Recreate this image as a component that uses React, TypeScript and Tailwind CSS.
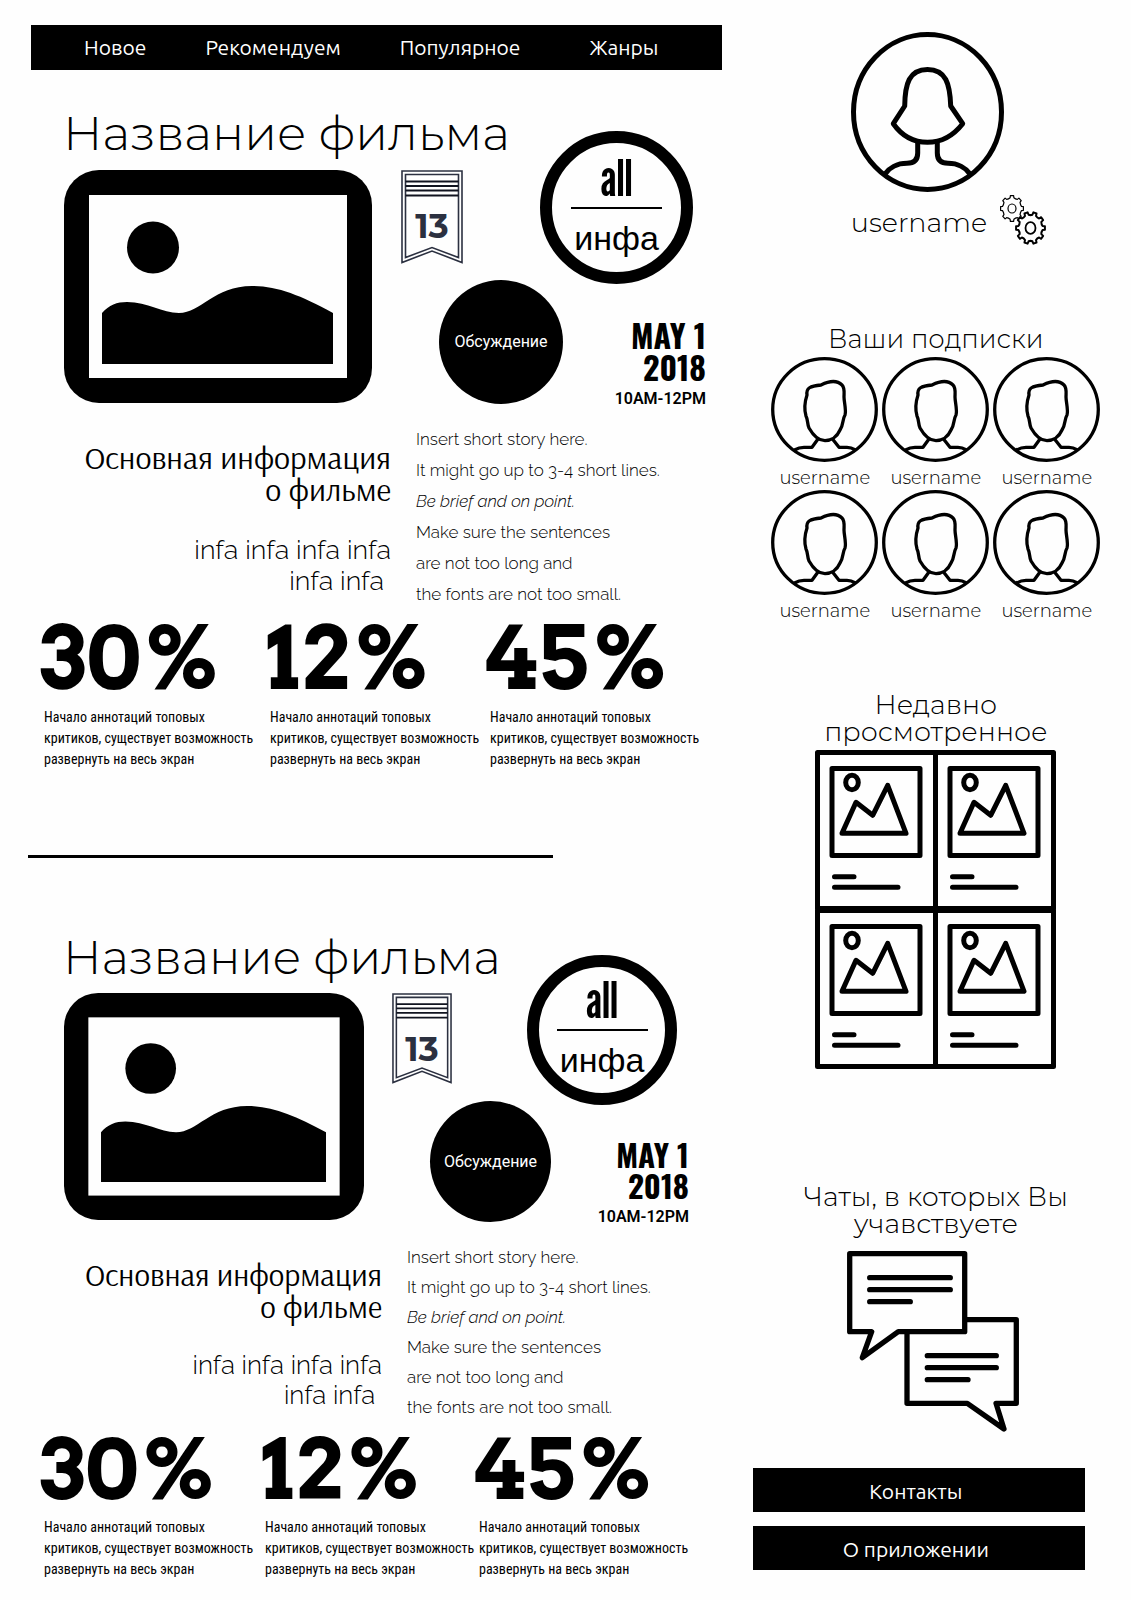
type Size = "large" | "small";

const display = "font-['Montserrat','Open_Sans',sans-serif]";
const story = "font-['Raleway','Lato',sans-serif]";
const poster = "font-['Oswald','Roboto_Condensed','Roboto',sans-serif]";
const ui = "font-['Ubuntu','Open_Sans',sans-serif]";
const condensed = "font-['Roboto_Condensed','Roboto',sans-serif]";

const sizes = {
  large: {
    title: "text-[48px] leading-[48px] mb-[13px]",
    picture: "w-[308px]",
    side: "w-[334px]",
    ribbon: "ml-[29px] w-[62px]",
    info: "ml-[77px] -mt-[39px] size-[153px]",
    discuss: "ml-[67px] size-[124px]",
    date: "text-[32px] leading-8",
    facts: "w-[360px] mt-[17px]",
    factsTitle: "text-[32px] leading-8",
    factsText: "text-[27px] leading-[31px] mt-[29px]",
    story: "leading-[31px]",
    stats: "grid-cols-[226px_220px_auto]",
    percent: "text-[86px] leading-[97px]",
  },
  small: {
    title: "text-[47px] leading-[48px] mb-[11px]",
    picture: "w-[300px]",
    side: "w-[325px]",
    ribbon: "ml-[28px] w-[60px]",
    info: "ml-[75px] -mt-[38px] size-[150px]",
    discuss: "ml-[66px] size-[121px]",
    date: "text-[31px] leading-[31px]",
    facts: "w-[351px] mt-[17px]",
    factsTitle: "text-[31px] leading-8",
    factsText: "text-[26px] leading-[30px] mt-[27px]",
    story: "leading-[30px]",
    stats: "grid-cols-[221px_214px_auto]",
    percent: "text-[84px] leading-[95px]",
  },
};

const storyLines = [
  "Insert short story here.",
  "It might go up to 3-4 short lines.",
  "Be brief and on point.",
  "Make sure the sentences",
  "are not too long and",
  "the fonts are not too small.",
];

function PictureIcon({ className }: { className: string }) {
  return (
    <svg viewBox="0 0 308 233" className={`shrink-0 ${className}`} role="img" aria-label="Кадр">
      <rect width="308" height="233" rx="35" />
      <rect x="25" y="25" width="258" height="183" fill="#fefefe" />
      <circle cx="89" cy="77.5" r="26" />
      <path d="M38 143C45 135 53 132 63 132C84 132 98 143 115 143C137 143 150 116 188 116C213 116 236 125 269 143V194H38Z" />
    </svg>
  );
}

function Ribbon({ className }: { className: string }) {
  return (
    <div className={`relative shrink-0 self-start ${className}`}>
      <svg viewBox="0 0 62 94" fill="none" stroke="#2b3040" strokeWidth="1.6" className="w-full">
        <path d="M1 1H61V92.5L31 81L1 92.5Z" />
        <path d="M4.5 4.5H57.5V87.5L31 77.5L4.5 87.5Z" />
        <path d="M4.5 11.5H57.5M4.5 16H57.5M4.5 20.5H57.5M4.5 25.5H57.5" stroke="#10131f" strokeWidth="1.8" />
      </svg>
      <span className={`absolute inset-x-0 top-9 text-center text-[34px] leading-10 font-bold text-[#2b3040] ${display}`}>13</span>
    </div>
  );
}

function Film({ size }: { size: Size }) {
  const s = sizes[size];
  return (
    <article>
      <h2 className={`pl-8 font-light whitespace-nowrap ${display} ${s.title}`}>Название фильма</h2>
      <div className="flex items-start pl-[33px]">
        <PictureIcon className={s.picture} />
        <div className={`flex shrink-0 flex-col ${s.side}`}>
          <div className="flex">
            <Ribbon className={s.ribbon} />
            <button className={`flex shrink-0 flex-col items-center justify-center rounded-full border-[12px] border-black ${s.info}`}>
              <span className="font-['League_Gothic','Antonio','Oswald',sans-serif] text-[50px] leading-[44px]">all</span>
              <span className="my-[7px] h-0.5 w-[91px] bg-black" />
              <span className="font-['Liberation_Sans',sans-serif] text-[34px] leading-[44px]">инфа</span>
            </button>
          </div>
          <div className="-mt-1 flex items-end justify-between">
            <button className={`shrink-0 rounded-full bg-black font-['Roboto',sans-serif] text-base text-white ${s.discuss}`}>
              Обсуждение
            </button>
            <p className={`-mb-[7px] text-right font-bold ${poster} ${s.date}`}>
              MAY 1<br />2018
              <span className="mt-1 block font-['Roboto',sans-serif] text-base leading-6 font-semibold">10AM-12PM</span>
            </p>
          </div>
        </div>
      </div>

      <div className="mt-[20px] flex gap-[25px]">
        <div className={`shrink-0 text-right ${s.facts}`}>
          <h3 className={`font-['Arsenal','Open_Sans',sans-serif] ${s.factsTitle}`}>
            Основная информация<br />о фильме
          </h3>
          <p className={`font-light ${story} ${s.factsText}`}>
            infa infa infa infa<br />infa infa&nbsp;
          </p>
        </div>
        <div className={`text-[17px] font-[350] whitespace-nowrap ${story} ${s.story}`}>
          {storyLines.map((line, i) => (
            <p key={line} className={i === 2 ? "italic" : ""}>{line}</p>
          ))}
        </div>
      </div>

      <div className={`grid pl-[9px] ${s.stats}`}>
        {["30%", "12%", "45%"].map((value) => (
          <div key={value}>
            <p className={`font-['Arvo','Roboto',sans-serif] font-black ${s.percent}`}>{value}</p>
            <p className={`pl-1 text-sm leading-[21px] whitespace-nowrap ${condensed}`}>
              Начало аннотаций топовых<br />критиков, существует возможность<br />развернуть на весь экран
            </p>
          </div>
        ))}
      </div>
    </article>
  );
}

function ProfileIcon() {
  return (
    <svg viewBox="0 0 153 160" fill="none" stroke="black" strokeWidth="5" strokeLinejoin="round" className="w-[153px]">
      <ellipse cx="76.5" cy="80" rx="74" ry="77.5" />
      <path d="M53.7 74C54 52 58 37.5 76.5 37.5S99 52 99.7 74L111.7 91.7C102 104 90 110.3 76.5 110.3S51 104 42.3 91.7Z" />
      <path d="M66.7 111V121C66.7 128 63 131.3 56 131.3C46 131.3 38 136 34 142M86.3 111V121C86.3 128 90 131.3 97 131.3C107 131.3 115 136 119 142" />
    </svg>
  );
}

function gearPath(cx: number, cy: number, rx: number, ry: number, teeth: number, turn: number) {
  const step = (Math.PI * 2) / teeth;
  const at = (a: number, k: number) =>
    `${(cx + Math.sin(a) * rx * k).toFixed(2)} ${(cy - Math.cos(a) * ry * k).toFixed(2)}`;
  let d = "";
  for (let i = 0; i < teeth; i++) {
    const a = i * step + turn;
    d += `${i ? "L" : "M"}${at(a - step * 0.25, 0.84)}L${at(a - step * 0.18, 1)}L${at(a + step * 0.18, 1)}L${at(a + step * 0.25, 0.84)}Q${at(a + step * 0.5, 0.78)} ${at(a + step * 0.75, 0.84)}`;
  }
  return d + "Z";
}

function GearsIcon() {
  return (
    <svg viewBox="0 0 46 50" fill="none" stroke="black" strokeLinejoin="round" className="w-[46px]">
      <path d={gearPath(12, 13.5, 11.5, 13, 8, 0)} strokeWidth="1.2" />
      <ellipse cx="12" cy="13.5" rx="4" ry="4.5" strokeWidth="1.2" />
      <path d={gearPath(30.5, 33, 14.5, 16, 10, Math.PI / 10)} fill="#fefefe" strokeWidth="2" />
      <ellipse cx="30.5" cy="33" rx="5" ry="5.8" strokeWidth="1.8" />
    </svg>
  );
}

function FriendIcon() {
  return (
    <svg viewBox="0 0 107 105" fill="none" stroke="black" strokeWidth="3.3" strokeLinejoin="round" className="w-[107px]">
      <ellipse cx="53.5" cy="52.5" rx="51.8" ry="50.8" />
      <path d="M36 38C35 31 39 29 50 28C58 24 66 23 71 28C74 31 73 36 73 40C73 45 75.5 53 74 58C71 63 73 67 69 73C66 80 60 83.7 54 83.7S42 78 38 71C36 66 37 63 35 59C33 52 34 44 36 38Z" />
      <path d="M47 82L41 90.3H33C29 90.3 26 91.5 23.5 93M61.5 82L68 90.3H76C80 90.3 82 91.5 84.5 93" />
    </svg>
  );
}

function RecentTile() {
  return (
    <svg viewBox="0 0 123 161" fill="none" stroke="black" strokeWidth="5" strokeLinejoin="round" strokeLinecap="round" className="w-[123px]">
      <rect x="2.5" y="2.5" width="118" height="156" />
      <rect x="17" y="18.5" width="88" height="87" />
      <ellipse cx="37" cy="32.5" rx="6.3" ry="7.2" />
      <path d="M27 83.3L41 52.3L57.7 65.3L72.7 35.3L91 83.3Z" />
      <path d="M19.5 126.7H39M19.5 137.3H83" />
    </svg>
  );
}

function ChatIcon() {
  return (
    <svg viewBox="0 0 172 181" fill="none" stroke="black" strokeWidth="5.3" strokeLinejoin="round" strokeLinecap="round" className="w-[172px]">
      <path d="M2.7 2.7H117.7V80.7H51.3L15.3 106.7L24.7 80.7H2.7Z" />
      <path d="M22.7 26.7H103.3M22.7 38.7H103.3M22.7 50.7H63.3" />
      <path d="M119 68.7H169.3V152.3H149L157 178L120.3 152.3H60V82" />
      <path d="M80.3 104.7H149.3M80.3 116.7H149.3M80.3 128.7H121" />
    </svg>
  );
}

export default function App() {
  return (
    <div className="flex min-h-[1600px] bg-[#fefefe] text-black">
      <main className="w-[64%] shrink-0 pt-[25px] pr-0.5 pl-[31px]">
        <nav className={`flex h-[45px] items-center gap-[59px] bg-black pl-[53px] text-[21px] text-white ${ui}`}>
          <a href="#new">Новое</a>
          <a href="#recommended">Рекомендуем</a>
          <a href="#popular">Популярное</a>
          <a href="#genres" className="ml-2.5">Жанры</a>
        </nav>
        <div className="mt-[39px]">
          <Film size="large" />
        </div>
        <hr className="mt-[85px] mb-[76px] -ml-[3px] w-[525px] border-t-[3px] border-black" />
        <Film size="small" />
      </main>

      <aside className={`flex flex-1 flex-col pt-8 pl-[29px] font-light ${display}`}>
        <section className="pl-[98px]">
          <ProfileIcon />
          <div className="flex gap-[13px]">
            <p className="mt-[15px] text-[27px] leading-8">username</p>
            <button aria-label="Настройки" className="mt-[3px]"><GearsIcon /></button>
          </div>
        </section>

        <section className="mt-[78px] w-[366px] text-center">
          <h2 className="text-[26px] leading-8">Ваши подписки</h2>
          <ul className="mx-auto mt-0.5 grid w-[330px] grid-cols-3 gap-x-[3px] gap-y-0.5">
            {[1, 2, 3, 4, 5, 6].map((n) => (
              <li key={n} className="flex flex-col items-center">
                <FriendIcon />
                <a href={`#user-${n}`} className="mt-1.5 text-lg leading-5">username</a>
              </li>
            ))}
          </ul>
        </section>

        <section className="mt-[70px] w-[366px] text-center">
          <h2 className="text-[27px] leading-[27px]">Недавно<br />просмотренное</h2>
          <div className="mt-[5px] flex flex-col items-center">
            <div className="flex"><RecentTile /><div className="-ml-[5px]"><RecentTile /></div></div>
            <div className="-mt-[3px] flex"><RecentTile /><div className="-ml-[5px]"><RecentTile /></div></div>
          </div>
        </section>

        <section className="mt-[114px] w-[366px] text-center">
          <h2 className="text-[27px] leading-[27px]">Чаты, в которых Вы<br />учавствуете</h2>
          <div className="mt-[14px] flex justify-center pr-1.5"><ChatIcon /></div>
        </section>

        <div className={`mt-9 flex w-[332px] flex-col gap-[14px] text-[21px] font-normal text-white ${ui}`}>
          <button className="h-11 bg-black pt-1 pr-1.5">Контакты</button>
          <button className="h-11 bg-black pt-1 pr-1.5">О приложении</button>
        </div>
      </aside>
    </div>
  );
}
